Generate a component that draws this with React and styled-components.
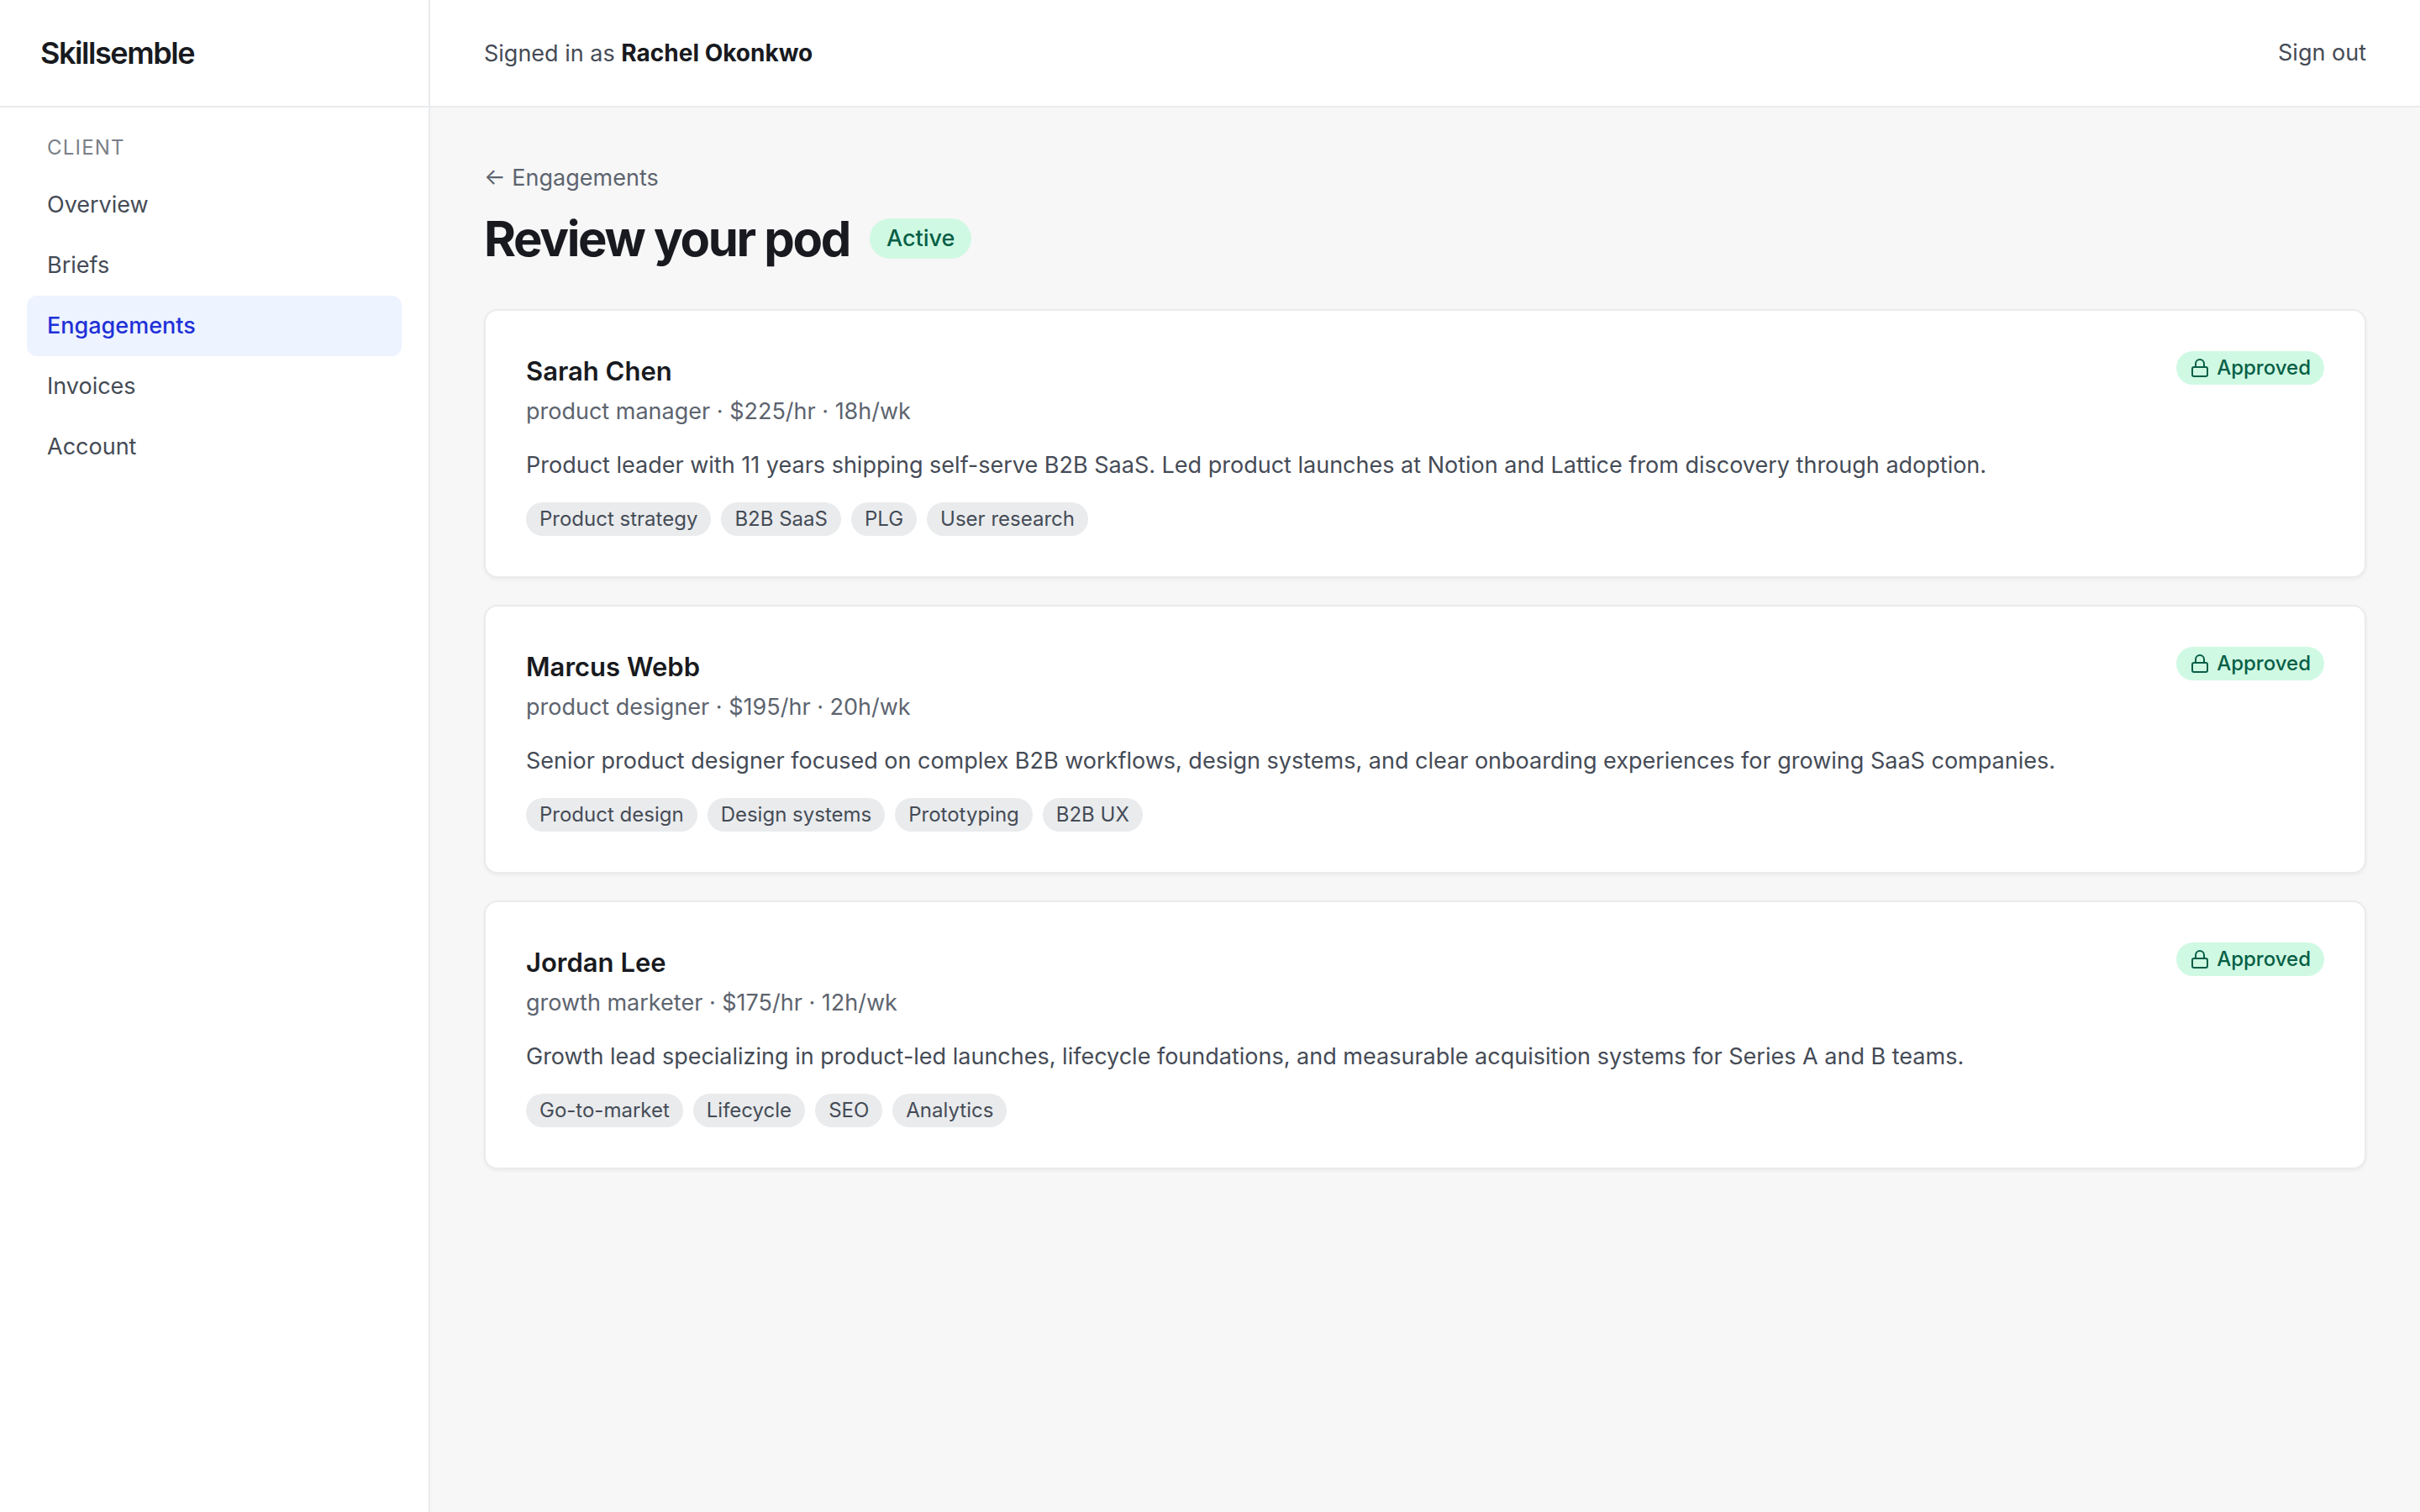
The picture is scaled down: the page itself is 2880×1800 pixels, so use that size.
import React from "react";
import styled, { createGlobalStyle } from "styled-components";

const GlobalStyle = createGlobalStyle`
  *, *::before, *::after { box-sizing: border-box; }
  body {
    margin: 0;
    background: #f7f7f7;
    color: #181a20;
    font-family: Inter, "Liberation Sans", sans-serif;
    font-size: 27px;
    line-height: 40px;
    -webkit-font-smoothing: antialiased;
  }
  h1, h2, p, ul { margin: 0; padding: 0; }
  ul { list-style: none; }
`;

const Shell = styled.div`
  display: grid;
  grid-template-columns: 512px 1fr;
  min-height: 100vh;
`;

const Sidebar = styled.aside`
  background: #ffffff;
  border-right: 2px solid #e9ebed;
`;

const Brand = styled.div`
  display: flex;
  align-items: center;
  height: 128px;
  padding: 0 48px;
  border-bottom: 2px solid #e9ebed;
  font-size: 36px;
  font-weight: 600;
  letter-spacing: -0.04em;
`;

const Nav = styled.nav`
  padding: 24px 32px;
`;

const NavHeading = styled.h2`
  padding: 8px 24px 16px;
  color: #7a8088;
  font-size: 24px;
  font-weight: 400;
  line-height: 32px;
  letter-spacing: 0.05em;
  text-transform: uppercase;
`;

const NavLink = styled.a`
  display: block;
  padding: 16px 24px;
  border-radius: 12px;
  background: ${(p) => (p.$active ? "#edf3ff" : "transparent")};
  color: ${(p) => (p.$active ? "#2130d8" : "#454b56")};
  font-weight: ${(p) => (p.$active ? 500 : 400)};
  text-decoration: none;
`;

const Column = styled.div`
  min-width: 0;
`;

const TopBar = styled.header`
  display: flex;
  align-items: center;
  justify-content: space-between;
  height: 128px;
  padding: 0 64px;
  background: #ffffff;
  border-bottom: 2px solid #e9ebed;
  color: #454b56;
`;

const UserName = styled.strong`
  color: #181a20;
  font-size: 28px;
  font-weight: 700;
`;

const SignOut = styled.button`
  padding: 0;
  border: 0;
  background: none;
  color: inherit;
  font: inherit;
  cursor: pointer;
`;

const Main = styled.main`
  padding: 64px;
`;

const BackLink = styled.a`
  display: block;
  width: fit-content;
  color: #5d646f;
  text-decoration: none;
`;

const TitleRow = styled.div`
  display: flex;
  align-items: center;
  gap: 24px;
  margin: 16px 0 48px;
`;

const Title = styled.h1`
  font-size: 58px;
  font-weight: 700;
  line-height: 72px;
  letter-spacing: -0.04em;
`;

const StatusPill = styled.span`
  padding: 4px 20px;
  border-radius: 24px;
  background: #d0f9e3;
  color: #065f46;
  font-weight: 500;
`;

const CardList = styled.ul`
  display: grid;
  gap: 32px;
`;

const Card = styled.li`
  display: flex;
  align-items: flex-start;
  justify-content: space-between;
  gap: 32px;
  padding: 48px;
  border: 2px solid #e9ebed;
  border-radius: 16px;
  background: #ffffff;
  box-shadow: 0 2px 4px rgba(0, 0, 0, 0.05);
`;

const Name = styled.h2`
  margin-bottom: 4px;
  font-size: 31px;
  font-weight: 600;
  line-height: 48px;
`;

const Terms = styled.p`
  color: #5d646f;
`;

const Bio = styled.p`
  margin: 24px 0;
  color: #454b56;
`;

const Tags = styled.ul`
  display: flex;
  flex-wrap: wrap;
  gap: 12px;
`;

const Tag = styled.li`
  padding: 4px 16px;
  border-radius: 20px;
  background: #e9ebed;
  color: #454b56;
  font-size: 24px;
  line-height: 32px;
`;

const Approved = styled.span`
  display: flex;
  flex: none;
  align-items: center;
  gap: 8px;
  padding: 4px 16px;
  border-radius: 20px;
  background: #d0f9e3;
  color: #065f46;
  font-size: 24px;
  font-weight: 500;
  line-height: 32px;
`;

const LockIcon = () => (
  <svg width="24" height="24" viewBox="0 0 24 24" fill="none" stroke="currentColor" strokeWidth="2" strokeLinecap="round" strokeLinejoin="round" aria-hidden="true">
    <rect x="3" y="11" width="18" height="11" rx="2" />
    <path d="M7 11V7a5 5 0 0 1 10 0v4" />
  </svg>
);

const navItems = ["Overview", "Briefs", "Engagements", "Invoices", "Account"];

const members = [
  {
    name: "Sarah Chen",
    terms: "product manager · $225/hr · 18h/wk",
    bio: "Product leader with 11 years shipping self-serve B2B SaaS. Led product launches at Notion and Lattice from discovery through adoption.",
    tags: ["Product strategy", "B2B SaaS", "PLG", "User research"],
  },
  {
    name: "Marcus Webb",
    terms: "product designer · $195/hr · 20h/wk",
    bio: "Senior product designer focused on complex B2B workflows, design systems, and clear onboarding experiences for growing SaaS companies.",
    tags: ["Product design", "Design systems", "Prototyping", "B2B UX"],
  },
  {
    name: "Jordan Lee",
    terms: "growth marketer · $175/hr · 12h/wk",
    bio: "Growth lead specializing in product-led launches, lifecycle foundations, and measurable acquisition systems for Series A and B teams.",
    tags: ["Go-to-market", "Lifecycle", "SEO", "Analytics"],
  },
];

export default function App() {
  return (
    <>
      <GlobalStyle />
      <Shell>
        <Sidebar>
          <Brand>Skillsemble</Brand>
          <Nav>
            <NavHeading>Client</NavHeading>
            {navItems.map((item) => (
              <NavLink key={item} href={`#${item.toLowerCase()}`} $active={item === "Engagements"}>
                {item}
              </NavLink>
            ))}
          </Nav>
        </Sidebar>
        <Column>
          <TopBar>
            <span>
              Signed in as <UserName>Rachel Okonkwo</UserName>
            </span>
            <SignOut type="button">Sign out</SignOut>
          </TopBar>
          <Main>
            <BackLink href="#engagements">← Engagements</BackLink>
            <TitleRow>
              <Title>Review your pod</Title>
              <StatusPill>Active</StatusPill>
            </TitleRow>
            <CardList>
              {members.map((m) => (
                <Card key={m.name}>
                  <div>
                    <Name>{m.name}</Name>
                    <Terms>{m.terms}</Terms>
                    <Bio>{m.bio}</Bio>
                    <Tags>
                      {m.tags.map((t) => (
                        <Tag key={t}>{t}</Tag>
                      ))}
                    </Tags>
                  </div>
                  <Approved>
                    <LockIcon />
                    Approved
                  </Approved>
                </Card>
              ))}
            </CardList>
          </Main>
        </Column>
      </Shell>
    </>
  );
}
